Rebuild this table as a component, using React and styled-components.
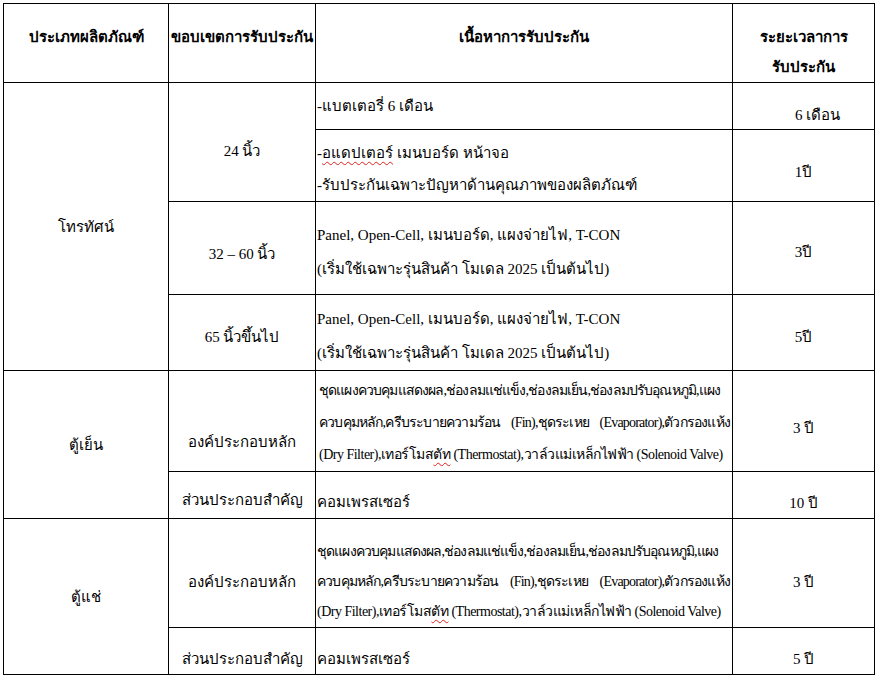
import styled, { createGlobalStyle } from "styled-components";

const GlobalStyle = createGlobalStyle`
	html, body {
		margin: 0;
		padding: 0;
		background: #fff;
	}
	body {
		font-family: "Liberation Serif", "Noto Sans", serif;
		color: #000;
	}
`;

const COLS = [165, 147, 417, 142];

const Page = styled.div`
	padding: 3px;
	width: 881px;
	box-sizing: border-box;
`;

const Table = styled.table`
	width: 871px;
	border-collapse: collapse;
	table-layout: fixed;
	font-size: 15px;
`;

const Row = styled.tr`
	height: ${(p) => p.$h}px;
`;

const HeadCell = styled.th`
	border: 1px solid #000;
	font-weight: 700;
	font-size: 15px;
	text-align: center;
	vertical-align: top;
	padding: 18px 0 0;
	line-height: 30px;
	white-space: nowrap;
`;

const Cell = styled.td`
	border: 1px solid #000;
	padding: ${(p) => p.$pt || 0}px 0 0 ${(p) => p.$left || 0}px;
	text-align: ${(p) => p.$align || "center"};
	vertical-align: middle;
	line-height: 24px;
	white-space: nowrap;
	overflow: hidden;
`;

const Line = styled.div`
	line-height: ${(p) => p.$lh || 35}px;
	text-align: left;
	white-space: nowrap;
`;

const TightLine = styled.div`
	line-height: ${(p) => p.$lh}px;
	font-size: 14px;
	letter-spacing: ${(p) => p.$ls}px;
	white-space: nowrap;
	text-align: ${(p) => (p.$justify ? "justify" : "left")};
	text-align-last: ${(p) => (p.$justify ? "justify" : "auto")};
	padding-right: 2px;
`;

const Typo = styled.span`
	text-decoration: underline wavy #e0201b;
	text-decoration-thickness: 1px;
	text-underline-offset: 3px;
`;

const Parts = ({ lh }) => (
	<>
		<TightLine $lh={lh} $ls={-0.85} $justify>
			ชุดแผงควบคุมแสดงผล,ช่องลมแช่แข็ง,ช่องลมเย็น,ช่องลมปรับอุณหภูมิ,แผง
		</TightLine>
		<TightLine $lh={lh} $ls={-0.8} $justify>
			ควบคุมหลัก,ครีบระบายความร้อน&nbsp; (Fin),ชุดระเหย&nbsp; (Evaporator),ตัวกรองแห้ง
		</TightLine>
		<TightLine $lh={lh} $ls={-0.5}>
			(Dry Filter),เทอร์โมส<Typo>ตัท</Typo> (Thermostat),วาล์วแม่เหล็กไฟฟ้า (Solenoid Valve)
		</TightLine>
	</>
);

const Panel = () => (
	<>
		<Line $lh={34}>Panel, Open-Cell, เมนบอร์ด, แผงจ่ายไฟ, T-CON</Line>
		<Line $lh={34}>(เริ่มใช้เฉพาะรุ่นสินค้า โมเดล 2025 เป็นต้นไป)</Line>
	</>
);

export default function App() {
	return (
		<Page>
			<GlobalStyle />
			<Table>
				<colgroup>
					{COLS.map((w, i) => (
						<col key={i} style={{ width: w }} />
					))}
				</colgroup>
				<tbody>
					<Row $h={78}>
						<HeadCell>ประเภทผลิตภัณฑ์</HeadCell>
						<HeadCell>ขอบเขตการรับประกัน</HeadCell>
						<HeadCell>เนื้อหาการรับประกัน</HeadCell>
						<HeadCell>
							ระยะเวลาการ
							<br />
							รับประกัน
						</HeadCell>
					</Row>
					<Row $h={47}>
						<Cell rowSpan={4}>โทรทัศน์</Cell>
						<Cell rowSpan={2} $pt={18}>
							24 นิ้ว
						</Cell>
						<Cell $align="left" $left={1}>
							<Line $lh={35}>-แบตเตอรี่ 6 เดือน</Line>
						</Cell>
						<Cell $pt={17} $left={28}>
							6 เดือน
						</Cell>
					</Row>
					<Row $h={72}>
						<Cell $align="left" $left={1} $pt={6}>
							<Line $lh={32}>
								-<Typo>อแดปเตอร์</Typo> เมนบอร์ด หน้าจอ
							</Line>
							<Line $lh={32}>-รับประกันเฉพาะปัญหาด้านคุณภาพของผลิตภัณฑ์</Line>
						</Cell>
						<Cell $pt={12}>1ปี</Cell>
					</Row>
					<Row $h={93}>
						<Cell $pt={12}>32 – 60 นิ้ว</Cell>
						<Cell $align="left" $left={1} $pt={7}>
							<Panel />
						</Cell>
						<Cell $pt={8}>3ปี</Cell>
					</Row>
					<Row $h={76}>
						<Cell $pt={8}>65 นิ้วขึ้นไป</Cell>
						<Cell $align="left" $left={1} $pt={6}>
							<Panel />
						</Cell>
						<Cell $pt={8}>5ปี</Cell>
					</Row>
					<Row $h={101}>
						<Cell rowSpan={2}>ตู้เย็น</Cell>
						<Cell $pt={42}>องค์ประกอบหลัก</Cell>
						<Cell $align="left" $left={3} $pt={3}>
							<Parts lh={32} />
						</Cell>
						<Cell $pt={14}>3 ปี</Cell>
					</Row>
					<Row $h={47}>
						<Cell $pt={10}>ส่วนประกอบสำคัญ</Cell>
						<Cell $align="left" $left={1} $pt={14}>
							คอมเพรสเซอร์
						</Cell>
						<Cell $pt={16}>10 ปี</Cell>
					</Row>
					<Row $h={108}>
						<Cell rowSpan={2}>ตู้แช่</Cell>
						<Cell $pt={18}>องค์ประกอบหลัก</Cell>
						<Cell $align="left" $left={1} $pt={18}>
							<Parts lh={30} />
						</Cell>
						<Cell $pt={18}>3 ปี</Cell>
					</Row>
					<Row $h={47}>
						<Cell $pt={16}>ส่วนประกอบสำคัญ</Cell>
						<Cell $align="left" $left={1} $pt={16}>
							คอมเพรสเซอร์
						</Cell>
						<Cell $pt={16}>5 ปี</Cell>
					</Row>
				</tbody>
			</Table>
		</Page>
	);
}
